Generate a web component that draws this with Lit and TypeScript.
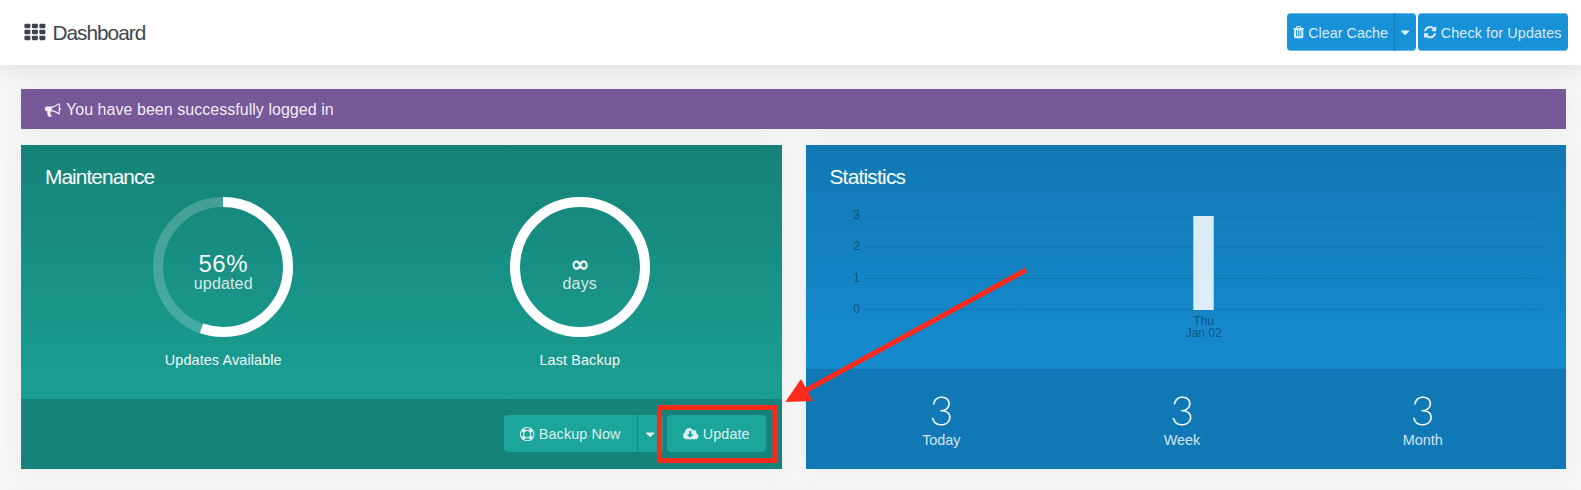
import { LitElement, html, css, svg } from "lit";
import { customElement, property } from "lit/decorators.js";

const ICONS: Record<string, { box: string; d: string }> = {
  trash: {
    box: "192 0 1408 1792",
    d: "M704 1376v-704q0-14-9-23t-23-9h-64q-14 0-23 9t-9 23v704q0 14 9 23t23 9h64q14 0 23-9t9-23zm256 0v-704q0-14-9-23t-23-9h-64q-14 0-23 9t-9 23v704q0 14 9 23t23 9h64q14 0 23-9t9-23zm256 0v-704q0-14-9-23t-23-9h-64q-14 0-23 9t-9 23v704q0 14 9 23t23 9h64q14 0 23-9t9-23zm-544-992h448l-48-117q-7-9-17-11h-317q-10 2-17 11zm928 32v64q0 14-9 23t-23 9h-96v948q0 83-47 143.5t-113 60.5h-832q-66 0-113-58.5t-47-141.5v-952h-96q-14 0-23-9t-9-23v-64q0-14 9-23t23-9h309l70-167q15-37 54-63t79-26h320q40 0 79 26t54 63l70 167h309q14 0 23 9t9 23z",
  },
  refresh: {
    box: "128 0 1536 1792",
    d: "M1639 1056q0 5-1 7-64 268-268 434.5t-478 166.5q-146 0-282.5-55t-243.5-157l-129 129q-19 19-45 19t-45-19-19-45v-448q0-26 19-45t45-19h448q26 0 45 19t19 45-19 45l-137 137q71 66 161 102t187 36q134 0 250-65t186-179q11-17 53-117 8-23 30-23h192q13 0 22.5 9.5t9.5 22.5zm25-800v448q0 26-19 45t-45 19h-448q-26 0-45-19t-19-45 19-45l138-138q-148-137-349-137-134 0-250 65t-186 179q-11 17-53 117-8 23-30 23h-199q-13 0-22.5-9.5t-9.5-22.5v-7q65-268 270-434.5t480-166.5q146 0 284 55.5t245 156.5l130-129q19-19 45-19t45 19 19 45z",
  },
  bullhorn: {
    box: "0 0 1792 1792",
    d: "M1664 640q53 0 90.5 37.5t37.5 90.5-37.5 90.5-90.5 37.5v384q0 52-38 90t-90 38q-417-347-812-380-58 19-91 66t-31 100.5 40 92.5q-20 33-23 65.5t6 58 33.5 55 48 50 61.5 50.5q-29 58-111.5 83t-168.5 11.5-132-55.5q-7-23-29.5-87.5t-32-94.5-23-89-15-101 3.5-98.5 22-110.5h-122q-66 0-113-47t-47-113v-192q0-66 47-113t113-47h480q435 0 896-384 52 0 90 38t38 90v384zm-128 604v-954q-394 302-768 343v270q377 42 768 341z",
  },
  ring: {
    box: "0 0 1792 1792",
    d: "M896 0q182 0 348 71t286 191 191 286 71 348-71 348-191 286-286 191-348 71-348-71-286-191-191-286-71-348 71-348 191-286 286-191 348-71zm0 128q-190 0-361 90l194 194q82-28 167-28t167 28l194-194q-171-90-361-90zm-678 1129l194-194q-28-82-28-167t28-167l-194-194q-90 171-90 361t90 361zm678 407q190 0 361-90l-194-194q-82 28-167 28t-167-28l-194 194q171 90 361 90zm0-384q159 0 271.5-112.5t112.5-271.5-112.5-271.5-271.5-112.5-271.5 112.5-112.5 271.5 112.5 271.5 271.5 112.5zm484-217l194 194q90-171 90-361t-90-361l-194 194q28 82 28 167t-28 167z",
  },
  cloud: {
    box: "-64 0 1920 1792",
    d: "M1216 928q0-14-9-23t-23-9h-224v-352q0-13-9.5-22.5t-22.5-9.5h-192q-13 0-22.5 9.5t-9.5 22.5v352h-224q-13 0-22.5 9.5t-9.5 22.5q0 14 9 23l352 352q9 9 23 9t23-9l351-351q10-12 10-24zm640 224q0 159-112.5 271.5t-271.5 112.5h-1088q-185 0-316.5-131.5t-131.5-316.5q0-130 70-240t188-165q-2-30-2-43 0-212 150-362t362-150q156 0 285.5 87t188.5 231q71-62 166-62 106 0 181 75t75 181q0 76-41 138 130 31 213.5 135.5t83.5 238.5z",
  },
  caret: {
    box: "384 -60 1024 1792",
    d: "M1408 704q0 26-19 45l-448 448q-19 19-45 19t-45-19l-448-448q-19-19-19-45t19-45 45-19h896q26 0 45 19t19 45z",
  },
};

function icon(name: string) {
  const { box, d } = ICONS[name];
  return html`<svg class="icon" viewBox=${box}><path d=${d} /></svg>`;
}

@customElement("progress-ring")
class ProgressRing extends LitElement {
  @property({ type: Number }) value = 1;
  @property() figure = "";
  @property() unit = "";
  @property() label = "";

  static styles = css`
    :host {
      display: flex;
      flex-direction: column;
      align-items: center;
      color: #fff;
    }
    .dial {
      display: grid;
      width: 140px;
      height: 140px;
    }
    .dial > * {
      grid-area: 1 / 1;
    }
    .track {
      fill: none;
      stroke: rgba(255, 255, 255, 0.2);
      stroke-width: 10;
    }
    .arc {
      fill: none;
      stroke: #fff;
      stroke-width: 10;
    }
    .text {
      display: flex;
      flex-direction: column;
      align-items: center;
      padding-top: 54px;
    }
    .figure {
      font-size: 24px;
      line-height: 25px;
      letter-spacing: 0.5px;
      opacity: 0.95;
    }
    .infinite {
      font-family: "DejaVu Sans", sans-serif;
      font-size: 23px;
      letter-spacing: 0;
      padding-top: 1px;
      line-height: 24px;
      -webkit-text-stroke: 0.6px #fff;
    }
    .unit {
      font-size: 16px;
      line-height: 16px;
      letter-spacing: 0.15px;
      opacity: 0.8;
    }
    .label {
      margin-top: 14px;
      font-size: 14.4px;
      line-height: 18px;
      letter-spacing: 0.12px;
      opacity: 0.95;
    }
  `;

  render() {
    const length = 2 * Math.PI * 65;
    return html`
      <div class="dial">
        <svg width="140" height="140" viewBox="0 0 140 140">
          <circle class="track" cx="70" cy="70" r="65" />
          <circle class="arc" cx="70" cy="70" r="65" transform="rotate(-90 70 70)"
            stroke-dasharray="${length * this.value} ${length}" />
        </svg>
        <div class="text">
          <span class="figure ${this.figure === "∞" ? "infinite" : ""}">${this.figure}</span>
          <span class="unit">${this.unit}</span>
        </div>
      </div>
      <span class="label">${this.label}</span>
    `;
  }
}

@customElement("visits-chart")
class VisitsChart extends LitElement {
  static styles = css`
    :host {
      display: block;
    }
    svg {
      display: block;
    }
    .grid {
      stroke: rgba(0, 0, 0, 0.2);
      stroke-width: 1;
      stroke-dasharray: 2 2;
    }
    .bar {
      fill: rgba(255, 255, 255, 0.85);
    }
    text {
      font-size: 12px;
      fill: rgba(0, 0, 0, 0.4);
    }
  `;

  render() {
    const ticks = [3, 2, 1, 0];
    return html`
      <svg width="713" height="150" viewBox="0 0 713 150">
        ${ticks.map((t, i) => {
          const y = 16.1 + i * 31.2;
          return svg`
            <line class="grid" x1="35" x2="712" y1=${y} y2=${y} />
            <text x="30" y=${y + 3.1} text-anchor="end">${t}</text>`;
        })}
        <rect class="bar" x="363.3" y="16" width="20.4" height="94" />
        <text x="373.7" y="125.3" text-anchor="middle">Thu</text>
        <text x="373.7" y="137.3" text-anchor="middle">Jan 02</text>
      </svg>
    `;
  }
}

@customElement("app-root")
class AppRoot extends LitElement {
  static styles = css`
    :host {
      display: block;
      position: relative;
      height: 490px;
      overflow: hidden;
      background: #f6f6f6;
      font-family: "Liberation Sans", Arial, sans-serif;
    }
    .icon {
      height: 1em;
      fill: currentColor;
      flex: none;
    }
    .topbar {
      position: relative;
      display: flex;
      justify-content: space-between;
      box-sizing: border-box;
      height: 65px;
      padding: 13px 13px 0 24px;
      background: #fff;
      box-shadow: 0 5px 20px rgba(0, 0, 0, 0.09);
    }
    .title {
      display: flex;
      gap: 6.5px;
      height: 39px;
      margin: 0;
      align-items: center;
      color: #414550;
      font-size: 20.8px;
      font-weight: 400;
      letter-spacing: -1px;
    }
    .th {
      fill: #3d424e;
      margin-top: -1px;
    }
    .tools,
    .split {
      display: flex;
    }
    .tools {
      gap: 2px;
    }
    .btn {
      display: flex;
      align-items: center;
      justify-content: center;
      gap: 4px;
      box-sizing: border-box;
      height: 38px;
      padding: 1px 0 0;
      border: 0;
      border-radius: 4px;
      background: #1791d8;
      color: rgba(255, 255, 255, 0.85);
      font: 14.4px "Liberation Sans", Arial, sans-serif;
      letter-spacing: 0.1px;
      white-space: nowrap;
    }
    .tools .btn {
      box-shadow: inset 0 1px rgba(255, 255, 255, 0.35), inset 0 -1px rgba(255, 255, 255, 0.35);
    }
    .split .btn:first-child {
      border-radius: 4px 0 0 4px;
    }
    .split .btn:last-child {
      border-radius: 0 4px 4px 0;
      border-left: 1px solid #127db9;
    }
    .tools .clear {
      width: 107px;
      letter-spacing: 0;
    }
    .clear-more {
      width: 22px;
    }
    .check {
      width: 150px;
    }
    .content {
      display: flex;
      flex-direction: column;
      gap: 16px;
      padding: 24px 15px 0 21px;
    }
    .alert,
    .card,
    .next {
      box-shadow: 0 0 20px rgba(0, 0, 0, 0.05);
    }
    .alert {
      display: flex;
      align-items: center;
      gap: 5px;
      box-sizing: border-box;
      height: 40px;
      padding: 2px 0 0 24px;
      background: #775899;
      color: rgba(255, 255, 255, 0.92);
      font-size: 16px;
      letter-spacing: 0.04px;
    }
    .cards {
      display: grid;
      grid-template-columns: 761px 760px;
      gap: 24px;
      height: 324px;
    }
    .card {
      display: flex;
      flex-direction: column;
      color: #fff;
    }
    .green {
      background: linear-gradient(#158278, #1b9f93 254px);
    }
    .blue {
      background: linear-gradient(#1179b4, #158bce 224px);
    }
    .heading {
      margin: 0;
      padding: 20px 24px 0;
      font-size: 20.8px;
      font-weight: 400;
      line-height: 24px;
      letter-spacing: -0.9px;
    }
    .blue .heading {
      padding-left: 23.5px;
      letter-spacing: -0.75px;
    }
    .rings {
      display: grid;
      grid-template-columns: 1fr 1fr;
      padding: 8px 24px 0;
    }
    .chart {
      padding: 11px 0 0 24px;
    }
    .foot {
      display: flex;
      box-sizing: border-box;
      margin-top: auto;
    }
    .foot-green {
      justify-content: flex-end;
      gap: 4px;
      height: 70px;
      padding: 16px 16px 0 0;
      background: #15837a;
    }
    .foot-green .btn {
      height: 37px;
      background: #1ca69b;
    }
    .foot-green .split .btn:last-child {
      border-left-color: #158a80;
    }
    .backup {
      width: 133px;
    }
    .backup-more {
      width: 26px;
    }
    .update {
      width: 99px;
    }
    .foot-blue {
      display: grid;
      grid-template-columns: repeat(3, 1fr);
      height: 100px;
      padding: 20px 23px 0 15px;
      background: #1079b5;
    }
    .stat {
      display: flex;
      flex-direction: column;
      align-items: center;
    }
    .count {
      font-family: Lato, sans-serif;
      font-size: 40px;
      font-weight: 100;
      line-height: 42px;
      -webkit-text-stroke: 0.8px #fff;
    }
    .period {
      font-size: 14.4px;
      line-height: 18px;
      opacity: 0.8;
    }
    .next {
      height: 40px;
      margin-top: 8px;
    }
    .marks {
      position: absolute;
      left: 0;
      top: 0;
    }
    .mark-line {
      fill: none;
      stroke: #ff2a1c;
      stroke-width: 5;
    }
    .mark-head {
      fill: #ff2a1c;
    }
  `;

  render() {
    const cells = [0, 1, 2];
    return html`
      <header class="topbar">
        <h1 class="title">
          <svg class="th" width="22" height="18" viewBox="0 0 22 18">
            ${cells.map((r) =>
              cells.map(
                (c) => svg`<rect x=${0.4 + c * 7.5} y=${0.7 + r * 6} width="6" height="4.5" rx="1.1" />`
              )
            )}
          </svg>
          <span>Dashboard</span>
        </h1>
        <div class="tools">
          <div class="split">
            <button class="btn clear">${icon("trash")}<span>Clear Cache</span></button>
            <button class="btn clear-more">${icon("caret")}</button>
          </div>
          <button class="btn check">${icon("refresh")}<span>Check for Updates</span></button>
        </div>
      </header>
      <main class="content">
        <div class="alert">${icon("bullhorn")}<span>You have been successfully logged in</span></div>
        <div class="cards">
          <section class="card green">
            <h2 class="heading">Maintenance</h2>
            <div class="rings">
              <progress-ring .value=${0.553} figure="56%" unit="updated" label="Updates Available"></progress-ring>
              <progress-ring .value=${1} figure="∞" unit="days" label="Last Backup"></progress-ring>
            </div>
            <div class="foot foot-green">
              <div class="split">
                <button class="btn backup">${icon("ring")}<span>Backup Now</span></button>
                <button class="btn backup-more">${icon("caret")}</button>
              </div>
              <button class="btn update">${icon("cloud")}<span>Update</span></button>
            </div>
          </section>
          <section class="card blue">
            <h2 class="heading">Statistics</h2>
            <div class="chart"><visits-chart></visits-chart></div>
            <div class="foot foot-blue">
              ${["Today", "Week", "Month"].map(
                (p) => html`<div class="stat"><span class="count">3</span><span class="period">${p}</span></div>`
              )}
            </div>
          </section>
        </div>
        <div class="next"></div>
      </main>
      <svg class="marks" width="1581" height="490" viewBox="0 0 1581 490">
        <rect class="mark-line" x="659.5" y="407.5" width="115.5" height="53" />
        <path class="mark-line" d="M1026 270L804 391.5" />
        <path class="mark-head" d="M785.3 402L801 379L813 401z" />
      </svg>
    `;
  }
}
